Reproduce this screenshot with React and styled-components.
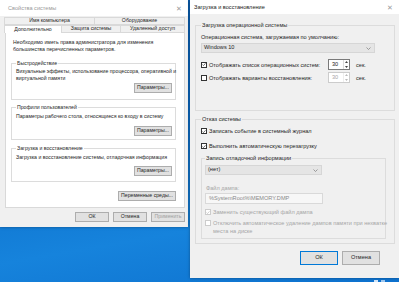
import React from "react";
import styled, { createGlobalStyle } from "styled-components";

const GlobalStyle = createGlobalStyle`
  html, body {
    margin: 0;
    padding: 0;
  }
  body {
    width: 399px;
    height: 282px;
    overflow: hidden;
    font-family: "Liberation Sans", "Noto Sans", sans-serif;
  }
  * {
    box-sizing: border-box;
  }
`;

const Desktop = styled.div`
  width: 399px;
  height: 282px;
  display: flex;
  align-items: flex-start;
  gap: 2px;
  background: linear-gradient(170deg, #0a5db0 0%, #0b6cc8 40%, #1683dc 75%, #0e72cf 100%);
  overflow: hidden;
`;

const Window = styled.div`
  width: ${(p) => p.$w}px;
  height: ${(p) => p.$h}px;
  background: #f0f0f0;
  display: flex;
  flex-direction: column;
  flex-shrink: 0;
  overflow: hidden;
  box-shadow: 0 0 3px rgba(0, 0, 0, 0.35);
  font-size: ${(p) => p.$fs}px;
  color: #1e1e1e;
  white-space: nowrap;
`;

const TitleBar = styled.div`
  height: ${(p) => p.$h}px;
  background: #fff;
  display: flex;
  align-items: center;
  justify-content: space-between;
  padding: 0 6px 0 ${(p) => p.$pl}px;
  color: ${(p) => (p.$active ? "#222" : "#9a9a9a")};
  font-size: 5.6px;
  flex-shrink: 0;
`;

const CloseGlyph = styled.span`
  font-size: 7px;
  color: #9a9a9a;
  line-height: 1;
`;

const LeftBody = styled.div`
  flex: 1;
  display: flex;
  flex-direction: column;
  padding: 1px 3px 0 5px;
`;

const TabRow = styled.div`
  display: flex;
  height: 8px;
`;

const Tab = styled.div`
  flex: ${(p) => p.$grow};
  display: flex;
  align-items: center;
  justify-content: center;
  border: 1px solid #d9d9d9;
  border-bottom: ${(p) => (p.$selected ? "none" : "1px solid #d9d9d9")};
  margin-left: -1px;
  background: ${(p) => (p.$selected ? "#fff" : "#f0f0f0")};
  line-height: 1;
`;

const Panel = styled.div`
  height: 175px;
  background: #fff;
  border: 1px solid #d9d9d9;
  border-top: none;
  padding: 6px 8px 0 5px;
  display: flex;
  flex-direction: column;
`;

const Intro = styled.div`
  line-height: 7px;
  padding-left: 2px;
`;

const Group = styled.fieldset`
  margin: ${(p) => p.$mt ?? 0}px 0 0 0;
  padding: 0 ${(p) => p.$pr ?? 3}px ${(p) => p.$pb}px ${(p) => p.$pl ?? 4}px;
  border: 1px solid #dcdcdc;
  min-width: 0;
  display: flex;
  flex-direction: column;
  height: ${(p) => (p.$h ? `${p.$h}px` : "auto")};
`;

const Legend = styled.legend`
  padding: 0 1px;
  line-height: 7px;
  font-size: inherit;
`;

const GroupText = styled.div`
  line-height: 7px;
  margin-top: ${(p) => p.$mt ?? 1}px;
`;

const ButtonRow = styled.div`
  display: flex;
  justify-content: flex-end;
  gap: ${(p) => p.$gap ?? 4}px;
  margin-top: ${(p) => p.$mt ?? 0}px;
  padding-right: ${(p) => p.$pr ?? 0}px;
`;

const Button = styled.div`
  width: ${(p) => p.$w}px;
  height: ${(p) => p.$h ?? 10}px;
  display: flex;
  align-items: center;
  justify-content: center;
  background: #e1e1e1;
  border: 1px solid ${(p) => (p.$default ? "#0078d7" : "#adadad")};
  color: ${(p) => (p.$disabled ? "#a0a0a0" : "#1e1e1e")};
  line-height: 1;
`;

const RightBody = styled.div`
  flex: 1;
  display: flex;
  flex-direction: column;
  padding: 8px 4px 0 5px;
`;

const Label = styled.div`
  line-height: 8px;
  color: ${(p) => (p.$disabled ? "#a6a6a6" : "#1e1e1e")};
  margin-top: ${(p) => p.$mt ?? 0}px;
  padding-left: ${(p) => p.$pl ?? 0}px;
`;

const Select = styled.div`
  width: ${(p) => p.$w}px;
  height: 10px;
  margin-top: ${(p) => p.$mt ?? 0}px;
  background: #e5e5e5;
  border: 1px solid #d6d6d6;
  display: flex;
  align-items: center;
  justify-content: space-between;
  padding: 0 3px 0 2px;
  line-height: 1;
`;

const Chevron = () => (
  <svg width="5" height="3" viewBox="0 0 5 3">
    <polyline points="0.5,0.5 2.5,2.5 4.5,0.5" fill="none" stroke="#7a7a7a" strokeWidth="0.7" />
  </svg>
);

const CheckRow = styled.div`
  display: flex;
  align-items: ${(p) => (p.$top ? "flex-start" : "center")};
  gap: 2px;
  margin-top: ${(p) => p.$mt ?? 0}px;
  color: ${(p) => (p.$disabled ? "#a6a6a6" : "#1e1e1e")};
  line-height: 8px;
`;

const Box = styled.span`
  width: 6px;
  height: 6px;
  flex-shrink: 0;
  border: 1px solid ${(p) => (p.$disabled ? "#cccccc" : "#333")};
  background: #fff;
  display: flex;
  align-items: center;
  justify-content: center;
  margin-top: ${(p) => (p.$top ? 1 : 0)}px;
`;

const Check = ({ color }) => (
  <svg width="5" height="5" viewBox="0 0 5 5">
    <polyline points="0.6,2.6 1.9,3.8 4.4,1" fill="none" stroke={color} strokeWidth="0.8" />
  </svg>
);

const CheckBox = ({ checked, disabled, top }) => (
  <Box $disabled={disabled} $top={top}>
    {checked && <Check color={disabled ? "#b5b5b5" : "#222"} />}
  </Box>
);

const SpinLine = styled.div`
  display: flex;
  align-items: center;
  margin-top: ${(p) => p.$mt ?? 0}px;
`;

const SpinLabel = styled(CheckRow)`
  width: 127px;
  margin-top: 0;
`;

const Spin = styled.div`
  width: 22px;
  height: 11px;
  border: 1px solid ${(p) => (p.$disabled ? "#cccccc" : "#7a7a7a")};
  background: #fff;
  display: flex;
  align-items: center;
  justify-content: space-between;
  padding-left: 3px;
  color: ${(p) => (p.$disabled ? "#a6a6a6" : "#1e1e1e")};
  line-height: 1;
`;

const SpinArrows = styled.div`
  width: 6px;
  height: 100%;
  display: flex;
  flex-direction: column;
  align-items: center;
  justify-content: space-around;
  border-left: 1px solid ${(p) => (p.$disabled ? "#eee" : "#ddd")};
`;

const Arrow = ({ up, color }) => (
  <svg width="3" height="2" viewBox="0 0 3 2">
    <polygon points={up ? "0,2 1.5,0 3,2" : "0,0 1.5,2 3,0"} fill={color} />
  </svg>
);

const Unit = styled.span`
  margin-left: 6px;
  color: ${(p) => (p.$disabled ? "#a6a6a6" : "#1e1e1e")};
`;

const Input = styled.div`
  width: 118px;
  height: 11px;
  margin-top: 1px;
  border: 1px solid #d9d9d9;
  background: #f7f7f7;
  color: #8a8a8a;
  display: flex;
  align-items: center;
  padding-left: 3px;
  line-height: 1;
`;

const Taskbar = styled.div`
  height: 4px;
  display: flex;
  justify-content: flex-end;
  align-items: flex-end;
  gap: 3px;
  padding-right: 14px;
`;

const TrayIcon = styled.span`
  width: ${(p) => p.$w}px;
  height: 2px;
  background: ${(p) => p.$c};
`;

const RightColumn = styled.div`
  display: flex;
  flex-direction: column;
`;

const Spinner = ({ value, disabled }) => {
  const c = disabled ? "#bbb" : "#444";
  return (
    <Spin $disabled={disabled}>
      {value}
      <SpinArrows $disabled={disabled}>
        <Arrow up color={c} />
        <Arrow color={c} />
      </SpinArrows>
    </Spin>
  );
};

export default function App() {
  return (
    <>
      <GlobalStyle />
      <Desktop>
        <Window $w={188} $h={227} $fs={5.2}>
          <TitleBar $h={16} $pl={8}>
            <span>Свойства системы</span>
            <CloseGlyph>✕</CloseGlyph>
          </TitleBar>
          <LeftBody>
            <TabRow>
              <Tab $grow={1}>Имя компьютера</Tab>
              <Tab $grow={1}>Оборудование</Tab>
            </TabRow>
            <TabRow>
              <Tab $grow={57} $selected>Дополнительно</Tab>
              <Tab $grow={59}>Защита системы</Tab>
              <Tab $grow={64}>Удаленный доступ</Tab>
            </TabRow>
            <Panel>
              <Intro>
                Необходимо иметь права администратора для изменения
                <br />
                большинства перечисленных параметров.
              </Intro>
              <Group $mt={7} $pb={6}>
                <Legend>Быстродействие</Legend>
                <GroupText>
                  Визуальные эффекты, использование процессора, оперативной и
                  <br />
                  виртуальной памяти
                </GroupText>
                <ButtonRow $mt={1}>
                  <Button $w={38}>Параметры...</Button>
                </ButtonRow>
              </Group>
              <Group $mt={4} $pb={3}>
                <Legend>Профили пользователей</Legend>
                <GroupText $mt={2}>
                  Параметры рабочего стола, относящиеся ко входу в систему
                </GroupText>
                <ButtonRow $mt={6}>
                  <Button $w={38}>Параметры...</Button>
                </ButtonRow>
              </Group>
              <Group $mt={5} $pb={5}>
                <Legend>Загрузка и восстановление</Legend>
                <GroupText $mt={2}>
                  Загрузка и восстановление системы, отладочная информация
                </GroupText>
                <ButtonRow $mt={5}>
                  <Button $w={38}>Параметры...</Button>
                </ButtonRow>
              </Group>
              <ButtonRow $mt={9}>
                <Button $w={58}>Переменные среды...</Button>
              </ButtonRow>
            </Panel>
            <ButtonRow $mt={4} $gap={4} $pr={0}>
              <Button $w={34}>ОК</Button>
              <Button $w={34}>Отмена</Button>
              <Button $w={34} $disabled>Применить</Button>
            </ButtonRow>
          </LeftBody>
        </Window>

        <RightColumn>
          <Window $w={209} $h={278} $fs={5.6}>
            <TitleBar $h={14} $pl={4} $active>
              <span>Загрузка и восстановление</span>
              <CloseGlyph>✕</CloseGlyph>
            </TitleBar>
            <RightBody>
              <Group $pb={0} $pl={5} $pr={3} $h={89}>
                <Legend>Загрузка операционной системы</Legend>
                <Label $mt={4}>Операционная система, загружаемая по умолчанию:</Label>
                <Select $w={174} $mt={2}>
                  Windows 10
                  <Chevron />
                </Select>
                <SpinLine $mt={6}>
                  <SpinLabel>
                    <CheckBox checked />
                    Отображать список операционных систем:
                  </SpinLabel>
                  <Spinner value="30" />
                  <Unit>сек.</Unit>
                </SpinLine>
                <SpinLine $mt={2}>
                  <SpinLabel>
                    <CheckBox />
                    Отображать варианты восстановления:
                  </SpinLabel>
                  <Spinner value="30" disabled />
                  <Unit>сек.</Unit>
                </SpinLine>
              </Group>
              <Group $mt={5} $pb={4} $pl={5} $pr={8}>
                <Legend>Отказ системы</Legend>
                <CheckRow $mt={4}>
                  <CheckBox checked />
                  Записать событие в системный журнал
                </CheckRow>
                <CheckRow $mt={7}>
                  <CheckBox checked />
                  Выполнить автоматическую перезагрузку
                </CheckRow>
                <Group $mt={5} $pb={3} $pl={3} $pr={3}>
                  <Legend>Запись отладочной информации</Legend>
                  <Select $w={117} $mt={3}>
                    (нет)
                    <Chevron />
                  </Select>
                  <Label $disabled $mt={9} $pl={1}>
                    Файл дампа:
                  </Label>
                  <Input>%SystemRoot%\MEMORY.DMP</Input>
                  <CheckRow $disabled $mt={4}>
                    <CheckBox checked disabled />
                    Заменить существующий файл дампа
                  </CheckRow>
                  <CheckRow $disabled $mt={3} $top>
                    <CheckBox disabled top />
                    <span>
                      Отключить автоматическое удаление дампов памяти при нехватке
                      <br />
                      места на диске
                    </span>
                  </CheckRow>
                </Group>
              </Group>
              <ButtonRow $mt={7} $gap={4} $pr={15}>
                <Button $w={38} $h={14} $default>
                  ОК
                </Button>
                <Button $w={38} $h={14}>
                  Отмена
                </Button>
              </ButtonRow>
            </RightBody>
          </Window>
          <Taskbar>
            <TrayIcon $w={4} $c="#cfe3f7" />
            <TrayIcon $w={4} $c="#9cc6ef" />
          </Taskbar>
        </RightColumn>
      </Desktop>
    </>
  );
}
